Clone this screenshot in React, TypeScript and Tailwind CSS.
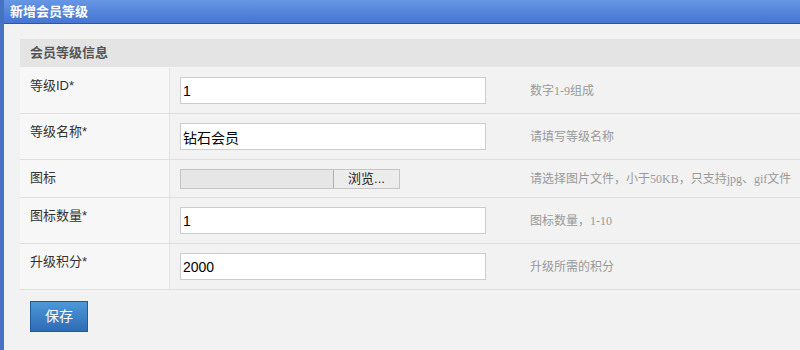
import React from "react";

const cjk = { fontFamily: '"Liberation Sans", "Noto Sans CJK SC", sans-serif' };
const hintFont = { fontFamily: '"Liberation Serif", "Noto Sans CJK SC", serif' };

const FormRow = ({
  label,
  hint,
  children,
  tall = true,
}: {
  label: string;
  hint: string;
  children: React.ReactNode;
  tall?: boolean;
}) => {
  return (
    <div className={`grid grid-cols-[150px_1fr] border-b border-[#dedede] ${tall ? "h-[46px]" : "h-[38px]"}`}>
      <div className="bg-[#f7f7f7] border-r border-[#e3e3e3] pl-[10px] pt-[8px] text-[13px] text-[#333]">
        {label}
      </div>
      <div className="flex items-center pl-[10px]">
        {children}
        <span className="text-[12px] text-[#999]" style={hintFont}>
          {hint}
        </span>
      </div>
    </div>
  );
};

const TextInput = ({ value }: { value: string }) => (
  <input
    readOnly
    value={value}
    className="w-[306px] h-[27px] mr-[44px] bg-white border border-[#cccccc] px-[2px] text-[14px] text-black outline-none"
    style={cjk}
  />
);

export default function App() {
  return (
    <div className="w-[800px] h-[350px] overflow-hidden bg-[#f2f2f2] border-l-4 border-[#4672c4]" style={cjk}>
      {/* Title bar */}
      <div className="h-[24px] bg-gradient-to-b from-[#6696e4] to-[#4476d2] border-b border-[#2c56a0] pl-[6px] flex items-center">
        <span className="text-white font-bold text-[13px]">新增会员等级</span>
      </div>

      <div className="pl-[16px] pt-[15px]">
        <div className="w-[800px]">
          {/* Section header */}
          <div className="h-[29px] bg-[#e4e4e4] border-b border-[#f7f7f7] pl-[10px] flex items-center">
            <span className="font-bold text-[13px] text-[#555]">会员等级信息</span>
          </div>

          <FormRow label="等级ID*" hint="数字1-9组成">
            <TextInput value="1" />
          </FormRow>
          <FormRow label="等级名称*" hint="请填写等级名称">
            <TextInput value="钻石会员" />
          </FormRow>
          <FormRow label="图标" hint="请选择图片文件，小于50KB，只支持jpg、gif文件" tall={false}>
            <div className="w-[220px] h-[20px] mr-[130px] flex border border-[#c4c4c4] bg-[#e6e6e6]">
              <div className="flex-1" />
              <div className="w-[66px] border-l border-[#b0b0b0] bg-[#ececec] flex items-center justify-center text-[13px] text-[#222]">
                浏览...
              </div>
            </div>
          </FormRow>
          <FormRow label="图标数量*" hint="图标数量，1-10">
            <TextInput value="1" />
          </FormRow>
          <FormRow label="升级积分*" hint="升级所需的积分">
            <TextInput value="2000" />
          </FormRow>

          <div className="pl-[10px] pt-[11px]">
            <button className="w-[58px] h-[31px] bg-gradient-to-b from-[#4d98d8] to-[#2f6cb6] border border-[#1f5b9c] text-white text-[14px]">
              保存
            </button>
          </div>
        </div>
      </div>
    </div>
  );
}
